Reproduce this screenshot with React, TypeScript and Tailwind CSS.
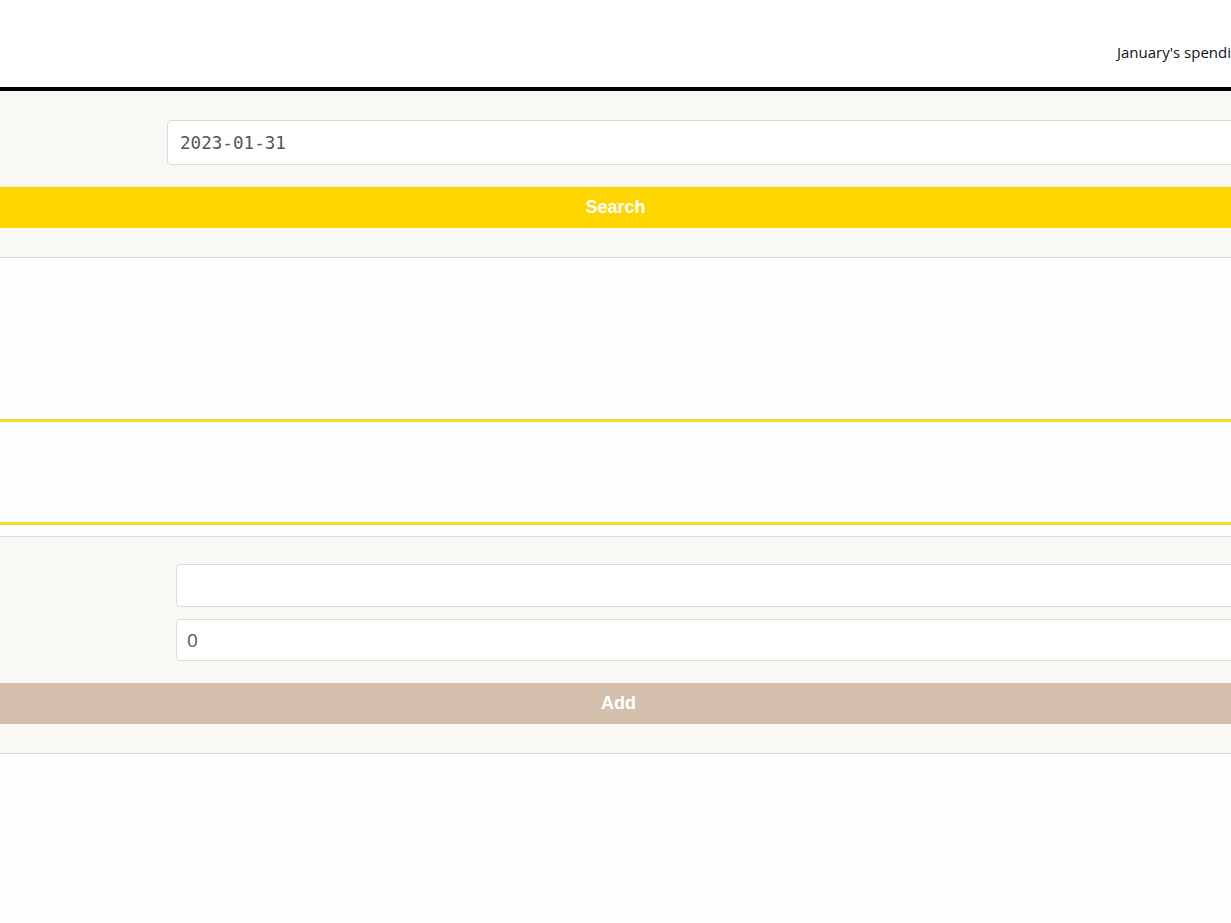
import React from "react";

const App = () => {
  return (
    <div className="w-[1231px] min-h-[923px] overflow-hidden bg-[#fefefe]">
      {/* header */}
      <header className="h-[91px] border-b-4 border-black bg-white">
        <div className="flex h-full items-center pl-[1117px] pt-[17px] w-[1400px]">
          <span className="text-[15px] text-[#111] whitespace-nowrap" style={{ fontFamily: '"Open Sans", sans-serif' }}>
            January's spending
          </span>
        </div>
      </header>

      {/* search form */}
      <section className="bg-[#f9f8f5] border-b border-[#dcd9d3] pt-[29px] pb-[29px]">
        <div className="pl-[167px]">
          <input
            type="text"
            defaultValue="2023-01-31"
            className="block h-[45px] w-[1200px] rounded-[4px] border border-[#ddd9d3] bg-white px-3 text-[17.6px] text-[#555] outline-none"
            style={{ fontFamily: '"DejaVu Sans Mono", monospace' }}
          />
        </div>
        <button
          className="mt-[22px] block h-[41px] w-full bg-[#ffd500] text-[18px] font-bold text-white"
          style={{ fontFamily: '"Liberation Sans", Arial, sans-serif' }}
        >
          Search
        </button>
      </section>

      {/* results */}
      <div className="h-[161px]" />
      <div className="h-[106px] border-y-[3px] border-[#fdd824] bg-[#fefefe]" />
      <div className="h-[12px] border-b border-[#dcd9d3]" />

      {/* add form */}
      <section className="bg-[#f9f8f5] border-b border-[#dcd9d3] pt-[27px] pb-[29px]">
        <div className="pl-[176px] flex flex-col gap-[12px]">
          <input
            type="text"
            className="block h-[43px] w-[1200px] rounded-[4px] border border-[#ddd9d3] bg-white px-[10px] text-[18px] text-[#555] outline-none"
            style={{ fontFamily: '"Open Sans", sans-serif' }}
          />
          <input
            type="text"
            defaultValue="0"
            className="block h-[42px] w-[1200px] rounded-[4px] border border-[#ddd9d3] bg-white px-[10px] text-[19px] text-[#555] outline-none"
            style={{ fontFamily: '"Open Sans", sans-serif' }}
          />
        </div>
        <button
          className="mt-[22px] block h-[41px] w-[1237px] bg-[#d3bfac] text-[18px] font-bold text-white"
          style={{ fontFamily: '"Liberation Sans", Arial, sans-serif' }}
        >
          Add
        </button>
      </section>
    </div>
  );
};

export default App;
